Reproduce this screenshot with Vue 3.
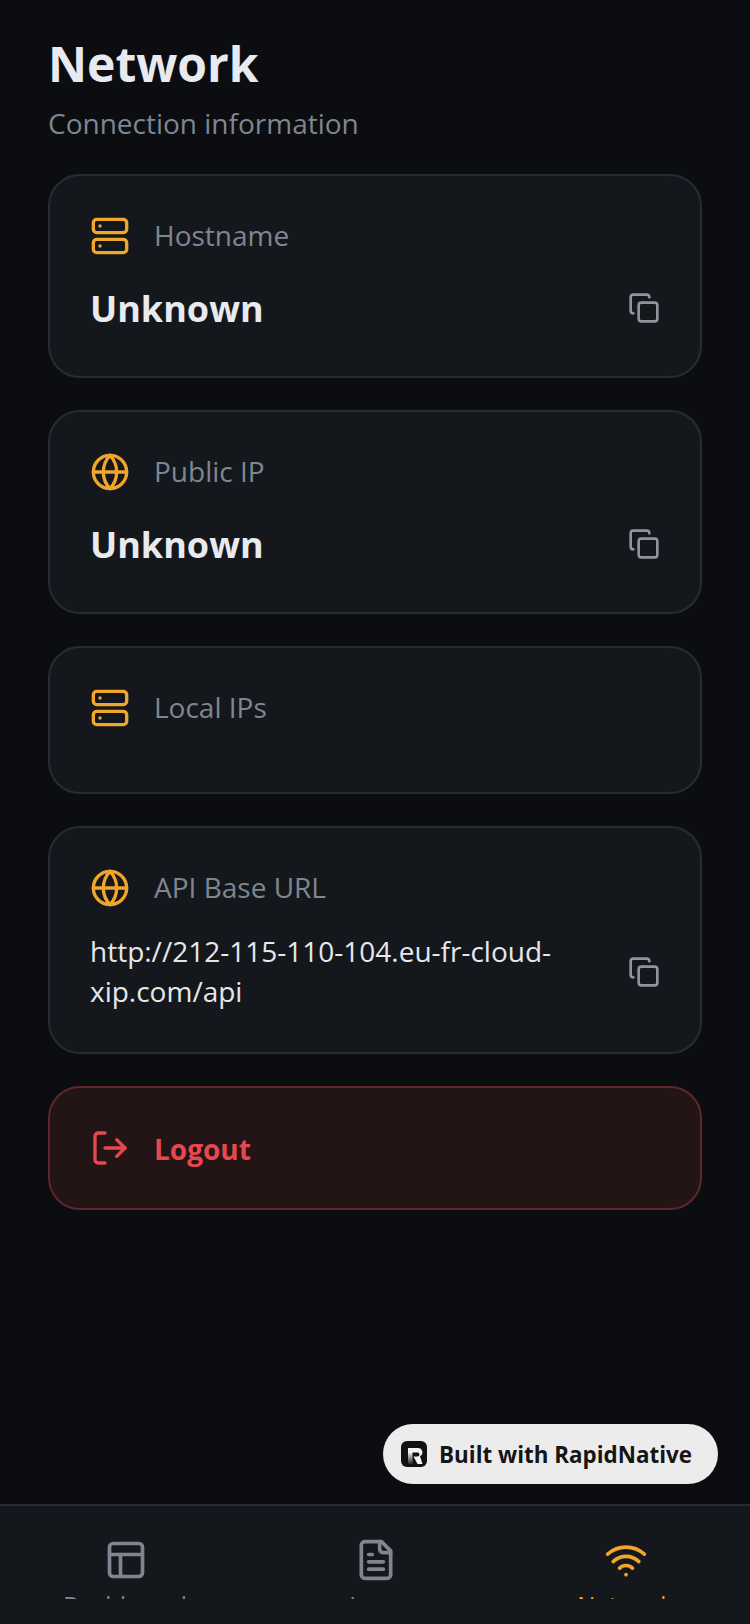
<script setup>
const cards = [
  { id: 'host', icon: 'server', label: 'Hostname', value: 'Unknown' },
  { id: 'public', icon: 'globe', label: 'Public IP', value: 'Unknown' },
  { id: 'local', icon: 'server', label: 'Local IPs', empty: true },
  { id: 'api', icon: 'globe', label: 'API Base URL', value: 'http://212-115-110-104.eu-fr-cloud-xip.com/api', plain: true },
];
</script>

<template>
  <div class="screen">
    <main class="content">
      <h1 class="title">Network</h1>
      <p class="subtitle">Connection information</p>

      <section v-for="card in cards" :key="card.id" class="card">
        <div class="card-head">
          <svg v-if="card.icon === 'server'" class="icon-40 amber" viewBox="0 0 24 24">
            <rect x="2" y="2" width="20" height="8" rx="2" />
            <rect x="2" y="14" width="20" height="8" rx="2" />
            <path d="M6 6h.01" />
            <path d="M6 18h.01" />
          </svg>
          <svg v-else class="icon-40 amber" viewBox="0 0 24 24">
            <circle cx="12" cy="12" r="10" />
            <path d="M12 2a14.5 14.5 0 0 0 0 20 14.5 14.5 0 0 0 0-20" />
            <path d="M2 12h20" />
          </svg>
          <span class="card-label">{{ card.label }}</span>
        </div>
        <div class="card-value-row">
          <template v-if="!card.empty">
            <span :class="card.plain ? 'value-plain' : 'value-bold'">{{ card.value }}</span>
            <span class="copy-btn">
              <svg class="icon-copy" viewBox="0 0 24 24">
                <rect x="8" y="8" width="14" height="14" rx="2" />
                <path d="M4 16c-1.1 0-2-.9-2-2V4c0-1.1.9-2 2-2h10c1.1 0 2 .9 2 2" />
              </svg>
            </span>
          </template>
        </div>
      </section>

      <button class="logout">
        <svg class="icon-40" viewBox="0 0 24 24">
          <path d="M9 21H5a2 2 0 0 1-2-2V5a2 2 0 0 1 2-2h4" />
          <path d="M16 17l5-5-5-5" />
          <path d="M21 12H9" />
        </svg>
        <span class="logout-text">Logout</span>
      </button>
    </main>

    <nav class="tabs">
      <div class="tab">
        <svg class="icon-44" viewBox="0 0 24 24">
          <rect x="3" y="3" width="18" height="18" rx="2" />
          <path d="M3 9h18" />
          <path d="M9 21V9" />
        </svg>
        <span class="tab-label">Dashboard</span>
      </div>
      <div class="tab">
        <svg class="icon-44" viewBox="0 0 24 24">
          <path d="M15 2H6a2 2 0 0 0-2 2v16a2 2 0 0 0 2 2h12a2 2 0 0 0 2-2V7Z" />
          <path d="M14 2v4a2 2 0 0 0 2 2h4" />
          <path d="M10 9H8" />
          <path d="M16 13H8" />
          <path d="M16 17H8" />
        </svg>
        <span class="tab-label">Logs</span>
      </div>
      <div class="tab active">
        <svg class="icon-44" viewBox="0 0 24 24">
          <path d="M12 20h.01" />
          <path d="M2 8.82a15 15 0 0 1 20 0" />
          <path d="M5 12.859a10 10 0 0 1 14 0" />
          <path d="M8.5 16.429a5 5 0 0 1 7 0" />
        </svg>
        <span class="tab-label">Network</span>
      </div>
    </nav>

    <div class="built-badge">
      <svg class="badge-logo" viewBox="0 0 26 26">
        <defs>
          <linearGradient id="logo-stem" x1="0" y1="0" x2="0" y2="1">
            <stop offset="0" stop-color="#f4f4f4" />
            <stop offset="1" stop-color="#f4f4f4" stop-opacity="0.1" />
          </linearGradient>
        </defs>
        <rect width="26" height="26" rx="6" fill="#111214" />
        <rect x="7" y="11" width="4.5" height="12" fill="url(#logo-stem)" />
        <path d="M7 7h10a4.4 4.4 0 0 1 2 8.3L21.5 23h-5l-4-7.5h4a2 2 0 0 0 0-4H7Z" fill="#f4f4f4" />
      </svg>
      <span>Built with RapidNative</span>
    </div>
  </div>
</template>

<style>
html,
body {
  margin: 0;
  background: #0b0d11;
}
</style>

<style scoped>
* {
  box-sizing: border-box;
}

.screen {
  position: relative;
  display: flex;
  flex-direction: column;
  width: 750px;
  height: 1624px;
  overflow: hidden;
  background: #0b0d11;
  font-family: "Open Sans", "Noto Sans", sans-serif;
}

.content {
  flex: 1;
  padding: 31px 48px;
}

.title {
  margin: 0 0 8px;
  font-size: 48px;
  font-weight: 700;
  color: #e8eaf0;
}

.subtitle {
  margin: 0 0 32px;
  font-size: 28px;
  color: #7f8691;
}

.card {
  margin-bottom: 32px;
  padding: 40px;
  border: 2px solid #262c34;
  border-radius: 32px;
  background: #14181d;
}

.card-head {
  display: flex;
  align-items: center;
  gap: 24px;
}

.card-label {
  padding-bottom: 2px;
  font-size: 28px;
  color: #7f8691;
}

.card-value-row {
  display: flex;
  align-items: center;
  justify-content: space-between;
  gap: 48px;
  margin-top: 24px;
}

.value-bold {
  font-size: 36px;
  font-weight: 700;
  color: #e8eaf0;
}

.value-plain {
  margin: -1px 0 1px;
  font-size: 28px;
  line-height: 40px;
  color: #e5e7eb;
}

.copy-btn {
  margin-right: -12px;
  padding: 12px;
}

svg {
  display: block;
  flex-shrink: 0;
  fill: none;
  stroke: currentColor;
  stroke-width: 2;
  stroke-linecap: round;
  stroke-linejoin: round;
}

.icon-40 {
  width: 40px;
  height: 40px;
}

.amber {
  color: #f0a52b;
}

.icon-copy {
  width: 32px;
  height: 32px;
  color: #8f959f;
}

.logout {
  display: flex;
  align-items: center;
  gap: 24px;
  width: 100%;
  padding: 40px;
  border: 2px solid #5f272b;
  border-radius: 32px;
  background: #231416;
  color: #e5484d;
  font-family: inherit;
  font-size: 28px;
  font-weight: 700;
}

.logout-text {
  padding-top: 2px;
}

.tabs {
  display: grid;
  grid-template-columns: repeat(3, 1fr);
  height: 120px;
  padding-bottom: 25px;
  border-top: 2px solid #262c34;
  background: #14181d;
}

.tab {
  display: flex;
  flex-direction: column;
  align-items: center;
  padding-top: 32px;
  overflow: hidden;
  color: #7f8691;
}

.tab.active {
  color: #f0a52b;
}

.icon-44 {
  width: 44px;
  height: 44px;
  margin-left: 2px;
}

.tab-label {
  margin-top: 6px;
  font-size: 24px;
  font-weight: 500;
}

.built-badge {
  position: absolute;
  top: 1424px;
  right: 32px;
  display: flex;
  align-items: center;
  gap: 12px;
  height: 60px;
  padding: 0 26px 0 18px;
  border-radius: 30px;
  background: #ececec;
  color: #151515;
  font-size: 22.4px;
  font-weight: 700;
}

.badge-logo {
  width: 26px;
  height: 26px;
  stroke: none;
}
</style>
